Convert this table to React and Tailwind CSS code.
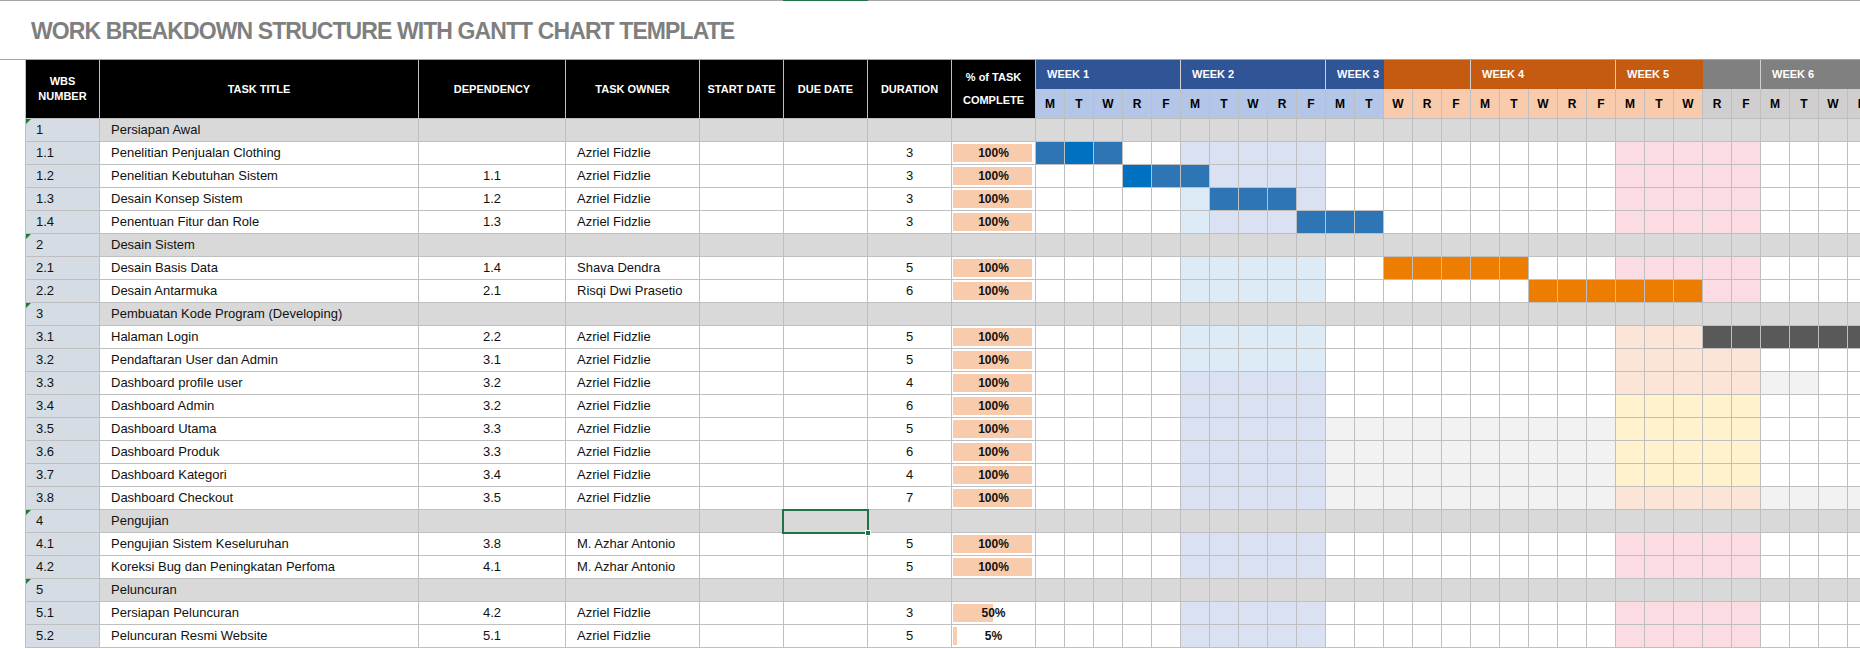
import React from 'react';

// colour codes for the gantt cells
const CELL = {
  w: 'bg-white',
  l: 'bg-[#D9E1F2]',
  s: 'bg-[#DDEBF7]',
  b: 'bg-[#2E75B6]',
  B: 'bg-[#0070C0]',
  o: 'bg-[#ED7D00]',
  p: 'bg-[#FCDCE3]',
  c: 'bg-[#FCE4D6]',
  y: 'bg-[#FFF2CC]',
  g: 'bg-[#F2F2F2]',
  d: 'bg-[#595959]',
};

const PINK = 'wwwww' + 'lllll' + 'wwwww' + 'wwwww' + 'ppppp' + 'wwww';

const rows = [
  { wbs: '1', title: 'Persiapan Awal', section: true },
  { wbs: '1.1', title: 'Penelitian Penjualan Clothing', dep: '', owner: 'Azriel Fidzlie', dur: 3, pct: 100, gantt: 'bBbww' + 'lllll' + 'wwwww' + 'wwwww' + 'ppppp' + 'wwww' },
  { wbs: '1.2', title: 'Penelitian Kebutuhan Sistem', dep: '1.1', owner: 'Azriel Fidzlie', dur: 3, pct: 100, gantt: 'wwwBb' + 'bllll' + 'wwwww' + 'wwwww' + 'ppppp' + 'wwww' },
  { wbs: '1.3', title: 'Desain Konsep Sistem', dep: '1.2', owner: 'Azriel Fidzlie', dur: 3, pct: 100, gantt: 'wwwww' + 'sbbbl' + 'wwwww' + 'wwwww' + 'ppppp' + 'wwww' },
  { wbs: '1.4', title: 'Penentuan Fitur dan Role', dep: '1.3', owner: 'Azriel Fidzlie', dur: 3, pct: 100, gantt: 'wwwww' + 'slllb' + 'bbwww' + 'wwwww' + 'ppppp' + 'wwww' },
  { wbs: '2', title: 'Desain Sistem', section: true },
  { wbs: '2.1', title: 'Desain Basis Data', dep: '1.4', owner: 'Shava Dendra', dur: 5, pct: 100, gantt: 'wwwww' + 'sssss' + 'wwooo' + 'oowww' + 'ppppp' + 'wwww' },
  { wbs: '2.2', title: 'Desain Antarmuka', dep: '2.1', owner: 'Risqi Dwi Prasetio', dur: 6, pct: 100, gantt: 'wwwww' + 'sssss' + 'wwwww' + 'wwooo' + 'ooopp' + 'wwww' },
  { wbs: '3', title: 'Pembuatan Kode Program (Developing)', section: true },
  { wbs: '3.1', title: 'Halaman Login', dep: '2.2', owner: 'Azriel Fidzlie', dur: 5, pct: 100, gantt: 'wwwww' + 'sssss' + 'wwwww' + 'wwwww' + 'cccdd' + 'dddd' },
  { wbs: '3.2', title: 'Pendaftaran User dan Admin', dep: '3.1', owner: 'Azriel Fidzlie', dur: 5, pct: 100, gantt: 'wwwww' + 'sssss' + 'wwwww' + 'wwwww' + 'ccccc' + 'wwww' },
  { wbs: '3.3', title: 'Dashboard profile user', dep: '3.2', owner: 'Azriel Fidzlie', dur: 4, pct: 100, gantt: 'wwwww' + 'lllll' + 'wwwww' + 'wwwww' + 'ccccc' + 'ggww' },
  { wbs: '3.4', title: 'Dashboard Admin', dep: '3.2', owner: 'Azriel Fidzlie', dur: 6, pct: 100, gantt: 'wwwww' + 'lllll' + 'wwwww' + 'wwwww' + 'yyyyy' + 'wwww' },
  { wbs: '3.5', title: 'Dashboard Utama', dep: '3.3', owner: 'Azriel Fidzlie', dur: 5, pct: 100, gantt: 'wwwww' + 'lllll' + 'ggggg' + 'ggggg' + 'yyyyy' + 'wwww' },
  { wbs: '3.6', title: 'Dashboard Produk', dep: '3.3', owner: 'Azriel Fidzlie', dur: 6, pct: 100, gantt: 'wwwww' + 'lllll' + 'ggggg' + 'ggggg' + 'yyyyy' + 'wwww' },
  { wbs: '3.7', title: 'Dashboard Kategori', dep: '3.4', owner: 'Azriel Fidzlie', dur: 4, pct: 100, gantt: 'wwwww' + 'lllll' + 'ggggg' + 'ggggg' + 'yyyyy' + 'wwww' },
  { wbs: '3.8', title: 'Dashboard Checkout', dep: '3.5', owner: 'Azriel Fidzlie', dur: 7, pct: 100, gantt: 'wwwww' + 'lllll' + 'ggggg' + 'ggggg' + 'ccccc' + 'gggg' },
  { wbs: '4', title: 'Pengujian', section: true, selected: true },
  { wbs: '4.1', title: 'Pengujian Sistem Keseluruhan', dep: '3.8', owner: 'M. Azhar Antonio', dur: 5, pct: 100, gantt: PINK },
  { wbs: '4.2', title: 'Koreksi Bug dan Peningkatan Perfoma', dep: '4.1', owner: 'M. Azhar Antonio', dur: 5, pct: 100, gantt: PINK },
  { wbs: '5', title: 'Peluncuran', section: true },
  { wbs: '5.1', title: 'Persiapan Peluncuran', dep: '4.2', owner: 'Azriel Fidzlie', dur: 3, pct: 50, gantt: PINK },
  { wbs: '5.2', title: 'Peluncuran Resmi Website', dep: '5.1', owner: 'Azriel Fidzlie', dur: 5, pct: 5, gantt: PINK },
];

const DAYS = ['M', 'T', 'W', 'R', 'F'];
const NDAYS = 29;

// week header segments
const weeks = [
  { span: 5, label: 'WEEK 1', bg: 'bg-[#2F5597]', sep: true },
  { span: 5, label: 'WEEK 2', bg: 'bg-[#2F5597]', sep: true },
  { span: 2, label: 'WEEK 3', bg: 'bg-[#2F5597]' },
  { span: 3, label: '', bg: 'bg-[#C55A11]', sep: true },
  { span: 5, label: 'WEEK 4', bg: 'bg-[#C55A11]', sep: true },
  { span: 3, label: 'WEEK 5', bg: 'bg-[#C55A11]' },
  { span: 2, label: '', bg: 'bg-[#808080]', sep: true },
  { span: 4, label: 'WEEK 6', bg: 'bg-[#808080]' },
];

const dayBg = (i) => (i < 12 ? 'bg-[#B4C6E7]' : i < 23 ? 'bg-[#F8CBAD]' : 'bg-[#D0CECE]');

const cell = 'h-[23px] shrink-0 border-r border-b border-[#BFBFBF] flex items-center';
const head = 'h-full shrink-0 bg-black text-white border-r border-b border-[#BFBFBF] flex items-center justify-center text-center';

const Corner = () => (
  <svg className="absolute left-0 top-0" width="5" height="5" viewBox="0 0 5 5">
    <polygon points="0,0 5,0 0,5" fill="#1E7B34" />
  </svg>
);

const Row = ({ r }) => {
  const sec = r.section;
  const bg = sec ? 'bg-[#D9D9D9]' : 'bg-white';
  return (
    <div className="flex">
      <div className={`${cell} relative w-[75px] border-l bg-[#D6DCE4] pl-[10px]`}>
        {sec && <Corner />}
        {r.wbs}
      </div>
      <div className={`${cell} ${bg} w-[319px] pl-[11px]`}>{r.title}</div>
      <div className={`${cell} ${bg} w-[147px] justify-center`}>{r.dep}</div>
      <div className={`${cell} ${bg} w-[134px] pl-[11px]`}>{r.owner}</div>
      <div className={`${cell} ${bg} w-[84px]`} />
      <div className={`${cell} ${bg} w-[84px] relative`}>
        {r.selected && (
          <div className="absolute -left-[2px] -top-[1px] w-[87px] h-[25px] border-2 border-[#217346] z-10">
            <div className="absolute -right-[4px] -bottom-[4px] w-[6px] h-[6px] bg-[#217346] border border-white" />
          </div>
        )}
      </div>
      <div className={`${cell} ${bg} w-[84px] justify-center`}>{r.dur}</div>
      <div className={`${cell} ${bg} w-[84px] relative justify-center font-bold text-[12px]`}>
        {!sec && (
          <div
            className="absolute left-[1px] top-[2px] bottom-[2px] bg-[#F8CBAD]"
            style={{ width: `calc((100% - 4px) * ${r.pct / 100})` }}
          />
        )}
        {!sec && <span className="relative">{r.pct}%</span>}
      </div>
      {Array.from({ length: NDAYS }).map((_, i) => (
        <div
          key={i}
          className={`${cell} w-[29px] ${sec ? 'bg-[#D9D9D9]' : CELL[r.gantt[i]]}`}
        />
      ))}
    </div>
  );
};

export default function App() {
  return (
    <div className="w-[1860px] h-[649px] overflow-hidden bg-white text-[#111] text-[13px] font-['Liberation_Sans',Arial,sans-serif]">
      {/* title strip */}
      <div className="relative h-[60px] border-t border-b border-[#A6A6A6] flex items-center pl-[31px] pt-[2px]">
        <div className="absolute -top-px left-[783px] w-[85px] h-px bg-[#217346]" />
        <h1 className="text-[23px] font-bold text-[#7F7F7F] tracking-[-0.9px]">
          WORK BREAKDOWN STRUCTURE WITH GANTT CHART TEMPLATE
        </h1>
      </div>

      <div className="pl-[25px]">
        {/* header */}
        <div className="flex h-[59px] font-bold text-[11px]">
          <div className={`${head} w-[75px] border-l leading-[15px]`}>WBS<br />NUMBER</div>
          <div className={`${head} w-[319px]`}>TASK TITLE</div>
          <div className={`${head} w-[147px]`}>DEPENDENCY</div>
          <div className={`${head} w-[134px]`}>TASK OWNER</div>
          <div className={`${head} w-[84px]`}>START DATE</div>
          <div className={`${head} w-[84px]`}>DUE DATE</div>
          <div className={`${head} w-[84px]`}>DURATION</div>
          <div className={`${head} w-[84px] leading-[23px]`}>% of TASK<br />COMPLETE</div>
          <div className="flex flex-col shrink-0">
            <div className="flex h-[29px]">
              {weeks.map((w, i) => (
                <div
                  key={i}
                  className={`${w.bg} shrink-0 h-full flex items-center pl-[11px] text-white ${w.sep ? 'border-r border-[#D0D0D0]' : ''}`}
                  style={{ width: w.span * 29 }}
                >
                  {w.label}
                </div>
              ))}
            </div>
            <div className="flex h-[30px] text-[12px]">
              {Array.from({ length: NDAYS }).map((_, i) => (
                <div
                  key={i}
                  className={`${dayBg(i)} w-[29px] shrink-0 h-full border-r border-b border-[#BFBFBF] flex items-center justify-center text-black`}
                >
                  {DAYS[i % 5]}
                </div>
              ))}
            </div>
          </div>
        </div>

        {rows.map((r, i) => (
          <Row key={i} r={r} />
        ))}
      </div>
    </div>
  );
}
